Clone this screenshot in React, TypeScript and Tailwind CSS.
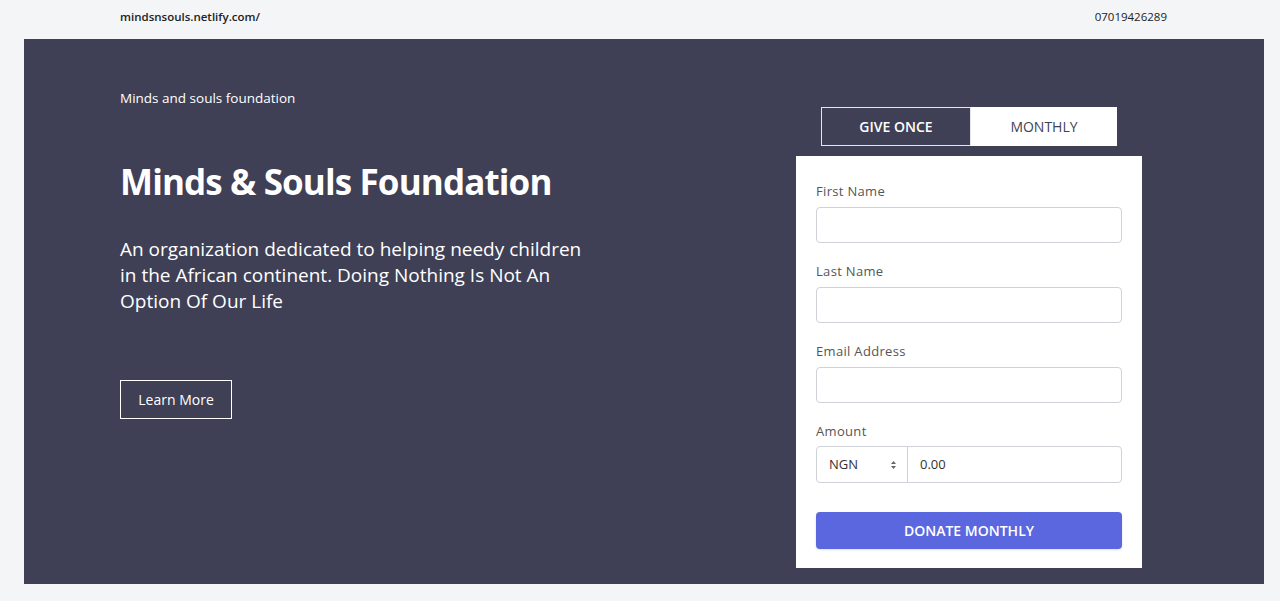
import { useState } from "react";

const font = { fontFamily: '"Open Sans", "Noto Sans", sans-serif' };

function Field({ label }: { label: string }) {
  return (
    <div className="mb-[18px]">
      <label className="block text-[13px] tracking-wide text-[#555] leading-[20px]">{label}</label>
      <input className="mt-[6px] block h-[36px] w-full rounded-[4px] border border-[#cfd2d6] px-3 text-[14px] outline-none" />
    </div>
  );
}

export default function App() {
  const [tab, setTab] = useState<"once" | "monthly">("once");
  return (
    <div style={font} className="min-h-[601px] bg-[#f4f5f7] text-[#222]">
      <header className="flex h-[39px] items-start justify-between pt-[8px] pl-[120px] pr-[113px] text-[11.5px] leading-[18px] font-semibold">
        <span>mindsnsouls.netlify.com/</span>
        <span className="font-normal">07019426289</span>
      </header>

      <main className="ml-[24px] mr-[16px] flex h-[545px] justify-between bg-[#3f3f56] pl-[96px] pr-[122px] text-white">
        <section className="pt-[50px]">
          <p className="text-[13.5px] leading-[18px]">Minds and souls foundation</p>
          <h1 className="mt-[53px] text-[35px] font-bold leading-[44px] tracking-tight">
            Minds &amp; Souls Foundation
          </h1>
          <p className="mt-[32px] w-[480px] text-[19px] leading-[26px]">
            An organization dedicated to helping needy children in the African continent. Doing Nothing Is Not An Option Of Our Life
          </p>
          <button className="mt-[66px] h-[39px] w-[112px] border border-white text-[14px]">Learn More</button>
        </section>

        <section className="flex w-[346px] flex-col items-center pt-[68px]">
          <div className="flex h-[39px] w-[296px] text-[14px]">
            <button
              onClick={() => setTab("once")}
              className="w-[150px] border border-[#e5e5ee] bg-[#3f3f56] font-semibold text-white"
            >
              GIVE ONCE
            </button>
            <button
              onClick={() => setTab("monthly")}
              className="flex-1 bg-white text-[#3f3f56]"
            >
              MONTHLY
            </button>
          </div>

          <form className="mt-[10px] w-full bg-white px-[20px] pt-[25px] pb-[19px]">
            <Field label="First Name" />
            <Field label="Last Name" />
            <Field label="Email Address" />
            <div>
              <label className="block text-[13px] tracking-wide text-[#555] leading-[20px]">Amount</label>
              <div className="mt-[5px] flex h-[37px] rounded-[4px] border border-[#cfd2d6] text-[13px] text-[#333]">
                <div className="flex w-[91px] items-center justify-between border-r border-[#cfd2d6] pl-[12px] pr-[10px]">
                  <span>NGN</span>
                  <svg width="7" height="10" viewBox="0 0 7 10" fill="#666">
                    <path d="M3.5 1 L6 4 H1 Z" />
                    <path d="M3.5 9 L6 6 H1 Z" />
                  </svg>
                </div>
                <input className="flex-1 px-[12px] outline-none" defaultValue="0.00" />
              </div>
            </div>
            <button
              type="button"
              className="mt-[29px] h-[37px] w-full rounded-[4px] bg-[#5a67de] text-[14px] font-semibold text-white shadow-sm"
            >
              {tab === "once" ? "DONATE MONTHLY" : "DONATE MONTHLY"}
            </button>
          </form>
        </section>
      </main>
    </div>
  );
}
